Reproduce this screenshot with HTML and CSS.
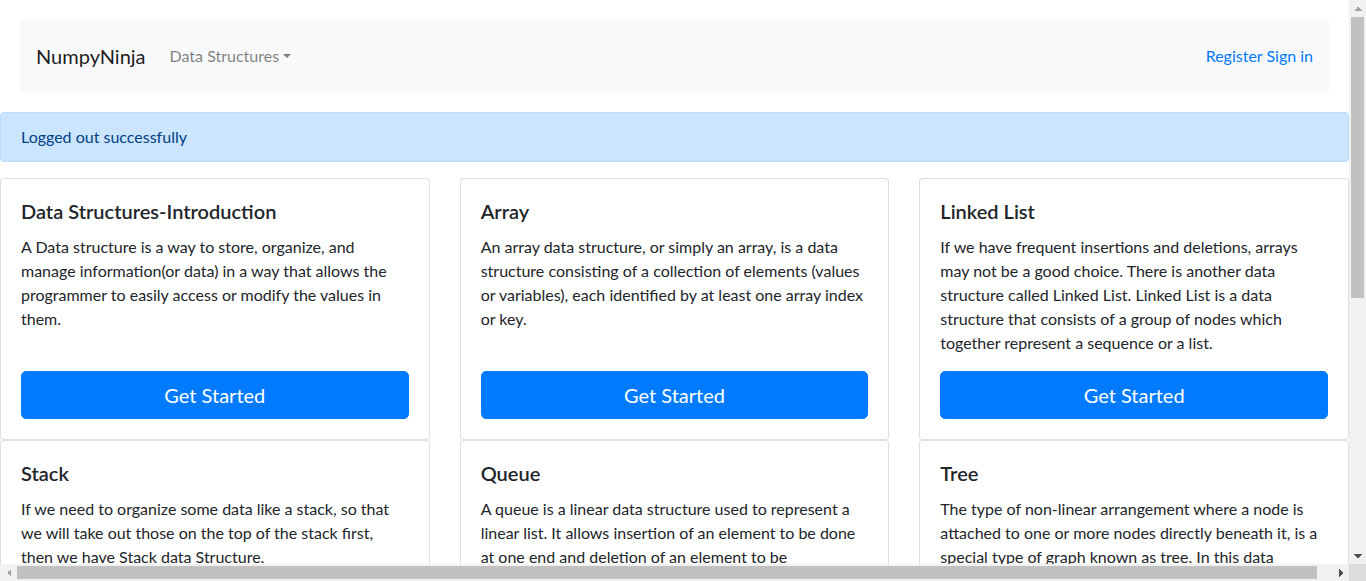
FILE: index.html
```html
<!DOCTYPE html>
<html lang="en">
<head>
<meta charset="utf-8">
<title>NumpyNinja</title>
<link rel="stylesheet" href="styles.css">
</head>
<body>
<div class="page">
  <nav class="navbar">
    <a class="brand" href="#">NumpyNinja</a>
    <a class="nav-link dropdown-toggle" href="#">Data Structures</a>
    <div class="nav-right">
      <a class="auth-link" href="#">Register</a> <a class="auth-link" href="#">Sign in</a>
    </div>
  </nav>

  <div class="alert">Logged out successfully</div>

  <div class="row">
    <div class="col">
      <div class="card">
        <div class="card-body">
          <h5 class="card-title">Data Structures-Introduction</h5>
          <p class="card-text">A Data structure is a way to store, organize, and<br>manage information(or data) in a way that allows the<br>programmer to easily access or modify the values in<br>them.</p>
          <a class="btn" href="#">Get Started</a>
        </div>
      </div>
    </div>
    <div class="col">
      <div class="card">
        <div class="card-body">
          <h5 class="card-title">Array</h5>
          <p class="card-text">An array data structure, or simply an array, is a data<br>structure consisting of a collection of elements (values<br>or variables), each identified by at least one array index<br>or key.</p>
          <a class="btn" href="#">Get Started</a>
        </div>
      </div>
    </div>
    <div class="col">
      <div class="card">
        <div class="card-body">
          <h5 class="card-title">Linked List</h5>
          <p class="card-text">If we have frequent insertions and deletions, arrays<br>may not be a good choice. There is another data<br>structure called Linked List. Linked List is a data<br>structure that consists of a group of nodes which<br>together represent a sequence or a list.</p>
          <a class="btn" href="#">Get Started</a>
        </div>
      </div>
    </div>
    <div class="col">
      <div class="card">
        <div class="card-body">
          <h5 class="card-title">Stack</h5>
          <p class="card-text">If we need to organize some data like a stack, so that<br>we will take out those on the top of the stack first,<br>then we have Stack data Structure.</p>
          <a class="btn" href="#">Get Started</a>
        </div>
      </div>
    </div>
    <div class="col">
      <div class="card">
        <div class="card-body">
          <h5 class="card-title">Queue</h5>
          <p class="card-text">A queue is a linear data structure used to represent a<br>linear list. It allows insertion of an element to be done<br>at one end and deletion of an element to be<br>performed at the other end.</p>
          <a class="btn" href="#">Get Started</a>
        </div>
      </div>
    </div>
    <div class="col">
      <div class="card">
        <div class="card-body">
          <h5 class="card-title">Tree</h5>
          <p class="card-text">The type of non-linear arrangement where a node is<br>attached to one or more nodes directly beneath it, is a<br>special type of graph known as tree. In this data<br>structure, a node can have any number of child nodes.</p>
          <a class="btn" href="#">Get Started</a>
        </div>
      </div>
    </div>
    <div class="col">
      <div class="card">
        <div class="card-body">
          <h5 class="card-title">Graph</h5>
          <p class="card-text">A graph is a non-linear data structure consisting of nodes and edges. The nodes are sometimes also referred to as vertices and the edges are lines or arcs that connect any two nodes in the graph.</p>
          <a class="btn" href="#">Get Started</a>
        </div>
      </div>
    </div>
  </div>
</div>

<div class="scrollbar scrollbar-v" aria-hidden="true">
  <span class="sb-btn sb-up"></span>
  <span class="sb-track"><span class="sb-thumb-v"></span></span>
  <span class="sb-btn sb-down"></span>
</div>
<div class="scrollbar scrollbar-h" aria-hidden="true">
  <span class="sb-btn sb-left"></span>
  <span class="sb-track"><span class="sb-thumb-h"></span></span>
  <span class="sb-btn sb-right"></span>
</div>
<div class="scrollbar-corner" aria-hidden="true"></div>
</body>
</html>
```
FILE: styles.css
```css
html {
  overflow: hidden;
}

body {
  margin: 0;
  font-family: Lato, "Liberation Sans", sans-serif;
  font-size: 16px;
  line-height: 1.5;
  color: #212529;
  background: #fff;
}

a {
  text-decoration: none;
}

.page {
  width: calc(100vw - 17px);
  padding-bottom: 100px;
}

/* navbar */
.navbar {
  display: flex;
  align-items: center;
  margin: 20px;
  padding: 16px;
  background: #f8f9fa;
}

.brand {
  font-size: 20px;
  line-height: 30px;
  padding: 5px 0;
  margin-right: 16px;
  color: rgba(0, 0, 0, 0.9);
}

.nav-link {
  padding: 8px;
  color: rgba(0, 0, 0, 0.5);
}

.dropdown-toggle::after {
  content: "";
  display: inline-block;
  margin-left: 0.255em;
  vertical-align: 0.255em;
  border-top: 0.3em solid;
  border-right: 0.3em solid transparent;
  border-left: 0.3em solid transparent;
  border-bottom: 0;
}

.nav-right {
  margin-left: auto;
}

.auth-link {
  color: #007bff;
}

/* alert */
.alert {
  padding: 12px 20px;
  margin-bottom: 16px;
  color: #004085;
  background: #cce5ff;
  border: 1px solid #b8daff;
  border-radius: 4px;
}

/* cards */
.row {
  display: flex;
  flex-wrap: wrap;
  margin: 0 -15px;
}

.col {
  box-sizing: border-box;
  flex: 0 0 33.333333%;
  max-width: 33.333333%;
  padding: 0 15px;
}

.card {
  display: flex;
  flex-direction: column;
  height: 100%;
  box-sizing: border-box;
  border: 1px solid rgba(0, 0, 0, 0.125);
  border-radius: 4px;
  background: #fff;
}

.card-body {
  flex: 1 1 auto;
  display: flex;
  flex-direction: column;
  padding: 20px;
}

.card-title {
  margin: 0 0 12px;
  font-size: 20px;
  font-weight: 600;
  line-height: 1.2;
}

.card-text {
  margin: 0 0 16px;
}

.btn {
  display: block;
  margin-top: auto;
  padding: 8px 16px;
  font-size: 20px;
  line-height: 1.5;
  text-align: center;
  color: #fff;
  background: #007bff;
  border: 1px solid #007bff;
  border-radius: 5px;
}

/* browser scrollbars (as in the screenshot) */
.scrollbar {
  position: fixed;
  display: flex;
  background: #f1f1f1;
  z-index: 10;
}

.scrollbar-v {
  top: 0;
  right: 0;
  width: 17px;
  bottom: 17px;
  flex-direction: column;
}

.scrollbar-h {
  left: 0;
  bottom: 0;
  height: 17px;
  right: 17px;
}

.scrollbar-corner {
  position: fixed;
  right: 0;
  bottom: 0;
  width: 17px;
  height: 17px;
  background: #dcdcdc;
  z-index: 10;
}

.sb-btn {
  flex: 0 0 17px;
  width: 17px;
  height: 17px;
  background-repeat: no-repeat;
  background-position: center;
}

.sb-up {
  background-size: 8px 4px;
  background-image: conic-gradient(from 135deg at 50% 0, #a3a3a3 0 90deg, transparent 90deg);
}

.sb-down {
  background-size: 8px 4px;
  background-image: conic-gradient(from -45deg at 50% 100%, #505050 0 90deg, transparent 90deg);
}

.sb-left {
  background-size: 4px 8px;
  background-image: conic-gradient(from 45deg at 0 50%, #a3a3a3 0 90deg, transparent 90deg);
}

.sb-right {
  background-size: 4px 8px;
  background-image: conic-gradient(from 225deg at 100% 50%, #505050 0 90deg, transparent 90deg);
}

.sb-track {
  flex: 1 1 auto;
  display: flex;
}

.scrollbar-v .sb-track {
  flex-direction: column;
  padding: 0 2px;
}

.scrollbar-h .sb-track {
  padding: 2px 0;
}

.sb-thumb-v {
  height: 281px;
  background: #c1c1c1;
}

.sb-thumb-h {
  width: 1300px;
  background: #c1c1c1;
}
```
